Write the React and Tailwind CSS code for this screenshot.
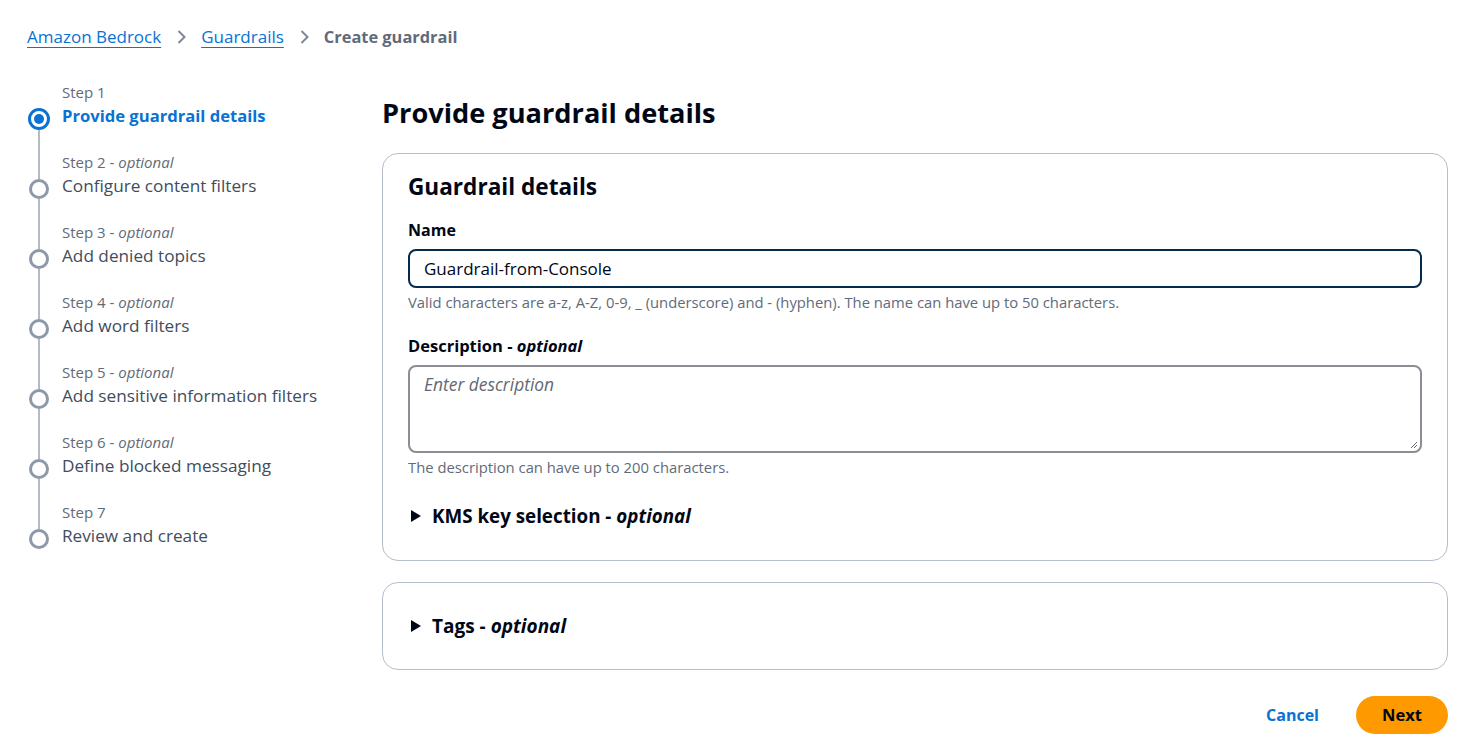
import React from 'react';

const font = { fontFamily: '"Open Sans", "Noto Sans", sans-serif' };

const steps = [
  { n: 1, title: 'Provide guardrail details', optional: false, active: true },
  { n: 2, title: 'Configure content filters', optional: true },
  { n: 3, title: 'Add denied topics', optional: true },
  { n: 4, title: 'Add word filters', optional: true },
  { n: 5, title: 'Add sensitive information filters', optional: true },
  { n: 6, title: 'Define blocked messaging', optional: true },
  { n: 7, title: 'Review and create', optional: false },
];

const Chevron = () => (
  <svg width="16" height="16" viewBox="0 0 16 16" className="mx-[12px]">
    <path d="M5.5 2l6 6-6 6" fill="none" stroke="#7d8998" strokeWidth="2" />
  </svg>
);

const Caret = () => (
  <svg width="10" height="12" viewBox="0 0 10 12" className="mr-[11px]">
    <path d="M0 0l10 6-10 6z" fill="#000716" />
  </svg>
);

const StepNav = () => (
  <nav className="w-[356px] shrink-0 pl-[28px]">
    {steps.map((s, i) => (
      <div key={s.n} className="flex">
        <div className="flex w-[22px] flex-col items-center">
          <div className={`w-[2px] ${s.active ? 'h-[28px]' : 'h-[29px]'} ${i === 0 ? 'bg-transparent' : 'bg-[#b4bbc4]'}`} />
          {s.active ? (
            <div className="flex h-[22px] w-[22px] items-center justify-center rounded-full border-[3px] border-[#0972d3]">
              <div className="h-[10px] w-[10px] rounded-full bg-[#0972d3]" />
            </div>
          ) : (
            <div className="h-[20px] w-[20px] rounded-full border-[3px] border-[#8d99a8]" />
          )}
          <div className={`w-[2px] flex-1 ${i === steps.length - 1 ? 'bg-transparent' : 'bg-[#b4bbc4]'}`} />
        </div>
        <div className="ml-[12px] pt-[3px] pb-[19px]">
          <div className="text-[15px] leading-[18px] text-[#5f6b7a]">
            Step {s.n}
            {s.optional && (
              <>
                {' - '}
                <i>optional</i>
              </>
            )}
          </div>
          <div
            className={`leading-[30px] ${
              s.active ? 'text-[16.6px] font-bold text-[#0972d3]' : 'text-[17.2px] text-[#414d5c]'
            }`}
          >
            {s.title}
          </div>
        </div>
      </div>
    ))}
  </nav>
);

export default function App() {
  return (
    <div className="min-h-screen bg-white text-[#000716]" style={font}>
      <div className="flex items-center pl-[27px] pt-[25px] text-[17px] leading-[24px]">
        <a className="text-[#0972d3] underline underline-offset-[4px]">Amazon Bedrock</a>
        <Chevron />
        <a className="text-[#0972d3] underline underline-offset-[4px]">Guardrails</a>
        <Chevron />
        <span className="text-[16.4px] font-bold text-[#5f6b7a]">Create guardrail</span>
      </div>

      <div className="mt-[31px] flex pr-[14px]">
        <StepNav />

        <main className="flex-1 pl-[26px]">
          <h1 className="mt-[15px] text-[27.2px] font-bold leading-[36px]">Provide guardrail details</h1>

          <section className="mt-[22px] rounded-[16px] border border-[#b6bec9] px-[25px] pt-[18px] pb-[32px]">
            <h2 className="text-[22.6px] font-bold leading-[30px]">Guardrail details</h2>

            <label className="mt-[17px] block text-[16px] font-bold leading-[22px]">Name</label>
            <div className="mt-[8px] flex h-[39px] items-center rounded-[8px] border-2 border-[#032b4e] px-[14px] text-[17px]">
              Guardrail-from-Console
            </div>
            <p className="mt-[5px] text-[14.8px] leading-[18px] text-[#5f6b7a]">
              Valid characters are a-z, A-Z, 0-9, _ (underscore) and - (hyphen). The name can have up to 50 characters.
            </p>

            <label className="mt-[24px] block text-[16.5px] font-bold leading-[22px]">
              Description - <i>optional</i>
            </label>
            <div className="relative mt-[8px] h-[88px] rounded-[8px] border-2 border-[#8c8c94] px-[14px] pt-[4px] text-[17.4px] italic text-[#656871]">
              Enter description
              <svg width="10" height="10" viewBox="0 0 10 10" className="absolute bottom-[2px] right-[2px]">
                <path d="M9 3L3 9M9 6L6 9" stroke="#5f6b7a" strokeWidth="1" />
              </svg>
            </div>
            <p className="mt-[5px] text-[14.8px] leading-[18px] text-[#5f6b7a]">
              The description can have up to 200 characters.
            </p>

            <div className="mt-[28px] flex items-center pl-[3px] text-[18.8px] font-bold leading-[24px]">
              <Caret />
              <span>
                KMS key selection - <i>optional</i>
              </span>
            </div>
          </section>

          <section className="mt-[21px] flex h-[88px] items-center rounded-[16px] border border-[#b6bec9] px-[28px]">
            <div className="flex items-center text-[19px] font-bold leading-[24px]">
              <Caret />
              <span>
                Tags - <i>optional</i>
              </span>
            </div>
          </section>

          <div className="mt-[26px] flex items-center justify-end gap-[37px]">
            <button className="text-[16px] font-bold text-[#0972d3]">Cancel</button>
            <button className="h-[38px] w-[92px] rounded-full bg-[#ff9900] text-[16.5px] font-bold text-[#000716]">
              Next
            </button>
          </div>
        </main>
      </div>
    </div>
  );
}
